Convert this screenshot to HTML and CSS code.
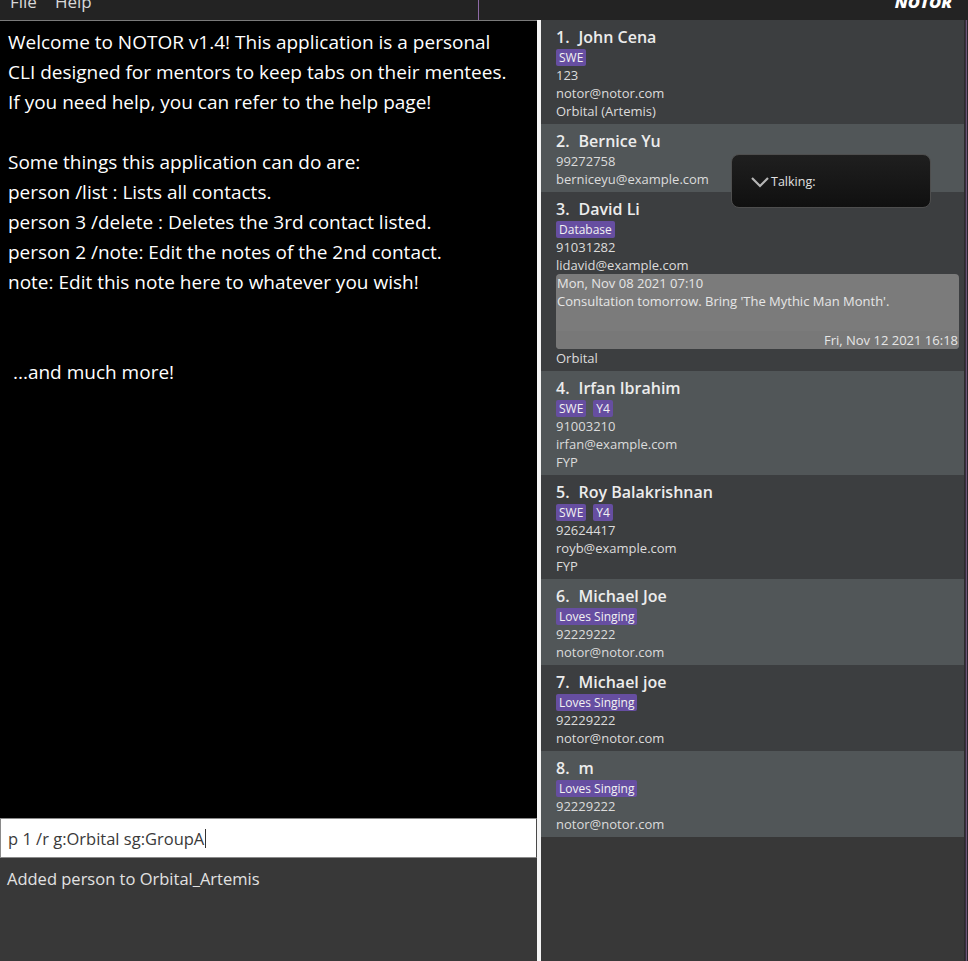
FILE: index.html
```html
<!DOCTYPE html>
<html>
<head>
<meta charset="utf-8">
<link rel="stylesheet" href="styles.css">
</head>
<body>
<div class="app">
  <div class="menubar">
    <span class="menu">File</span>
    <span class="menu">Help</span>
    <span class="sep"></span>
    <span class="spacer"></span>
    <span class="logo">NOTOR</span>
  </div>
  <div class="main">
    <div class="left">
      <div class="welcome">Welcome to NOTOR v1.4! This application is a personal
CLI designed for mentors to keep tabs on their mentees.
If you need help, you can refer to the help page!

Some things this application can do are:
person /list : Lists all contacts.
person 3 /delete : Deletes the 3rd contact listed.
person 2 /note: Edit the notes of the 2nd contact.
note: Edit this note here to whatever you wish!


 ...and much more!</div>
      <div class="command"><span class="cmdtext">p 1 /r g:Orbital sg:GroupA</span><span class="caret"></span></div>
      <div class="result">Added person to Orbital_Artemis</div>
    </div>
    <div class="divider"></div>
    <div class="right">
      <div class="list">
        <div class="card odd">
          <div class="name"><span class="idx">1.</span><span class="nm">John Cena</span></div>
          <div class="tags"><span class="tag">SWE</span></div>
          <div class="line">123</div>
          <div class="line">notor@notor.com</div>
          <div class="line">Orbital (Artemis)</div>
        </div>
        <div class="card even">
          <div class="name"><span class="idx">2.</span><span class="nm">Bernice Yu</span></div>
          <div class="line">99272758</div>
          <div class="line">berniceyu@example.com</div>
        </div>
        <div class="card odd">
          <div class="name"><span class="idx">3.</span><span class="nm">David Li</span></div>
          <div class="tags"><span class="tag">Database</span></div>
          <div class="line">91031282</div>
          <div class="line">lidavid@example.com</div>
          <div class="note">
            <div class="note-body">
              <div class="nline">Mon, Nov 08 2021 07:10</div>
              <div class="nline">Consultation tomorrow. Bring 'The Mythic Man Month'.</div>
            </div>
            <div class="note-foot">Fri, Nov 12 2021 16:18</div>
          </div>
          <div class="line">Orbital</div>
        </div>
        <div class="card even">
          <div class="name"><span class="idx">4.</span><span class="nm">Irfan Ibrahim</span></div>
          <div class="tags"><span class="tag">SWE</span><span class="tag">Y4</span></div>
          <div class="line">91003210</div>
          <div class="line">irfan@example.com</div>
          <div class="line">FYP</div>
        </div>
        <div class="card odd">
          <div class="name"><span class="idx">5.</span><span class="nm">Roy Balakrishnan</span></div>
          <div class="tags"><span class="tag">SWE</span><span class="tag">Y4</span></div>
          <div class="line">92624417</div>
          <div class="line">royb@example.com</div>
          <div class="line">FYP</div>
        </div>
        <div class="card even">
          <div class="name"><span class="idx">6.</span><span class="nm">Michael Joe</span></div>
          <div class="tags"><span class="tag">Loves Singing</span></div>
          <div class="line">92229222</div>
          <div class="line">notor@notor.com</div>
        </div>
        <div class="card odd">
          <div class="name"><span class="idx">7.</span><span class="nm">Michael joe</span></div>
          <div class="tags"><span class="tag">Loves Singing</span></div>
          <div class="line">92229222</div>
          <div class="line">notor@notor.com</div>
        </div>
        <div class="card even">
          <div class="name"><span class="idx">8.</span><span class="nm">m</span></div>
          <div class="tags"><span class="tag">Loves Singing</span></div>
          <div class="line">92229222</div>
          <div class="line">notor@notor.com</div>
        </div>
      </div>
      <div class="edge"></div>
      <div class="popup">
        <svg class="chev" width="20" height="12" viewBox="0 0 20 12"><path d="M2 2 L10 10 L18 2" fill="none" stroke="#b5b5b5" stroke-width="2.2"/></svg>
        <span class="ptext">Talking:</span>
      </div>
    </div>
  </div>
</div>
</body>
</html>
```

FILE: styles.css
```css
html, body {
  margin: 0;
  padding: 0;
  background: #383838;
}
body {
  width: 968px;
  height: 961px;
  overflow: hidden;
  font-family: "Open Sans", "Noto Sans", sans-serif;
}
.app {
  display: flex;
  flex-direction: column;
  height: 961px;
}
.menubar {
  height: 20px;
  background: #232323;
  display: flex;
  align-items: flex-start;
  overflow: hidden;
  flex: none;
}
.menu {
  color: #d8d8d8;
  font-size: 17px;
  line-height: 22px;
  margin-top: -9px;
  margin-left: 10px;
  margin-right: 10px;
}
.menu + .menu {
  margin-left: 8px;
}
.sep {
  width: 1px;
  height: 20px;
  background: #8e6aa6;
  margin-left: 376px;
}
.spacer {
  flex: 1;
}
.logo {
  color: #ffffff;
  font-weight: 800;
  font-style: italic;
  font-size: 16.5px;
  line-height: 24px;
  margin-top: -10px;
  margin-right: 16px;
}
.main {
  flex: 1;
  display: flex;
  min-height: 0;
}
.left {
  width: 537px;
  display: flex;
  flex-direction: column;
  flex: none;
}
.welcome {
  flex: 1;
  background: #000;
  border-top: 1px solid #7a7a7a;
  color: #ffffff;
  font-size: 19px;
  line-height: 30px;
  padding: 6px 0 0 8px;
  white-space: pre;
  overflow: hidden;
}
.command {
  height: 38px;
  background: #ffffff;
  border: 1px solid #8a8a8a;
  border-right-color: #4a4a4a;
  display: flex;
  align-items: center;
  padding-left: 7px;
  flex: none;
}
.cmdtext {
  color: #3a3a3a;
  font-size: 16.5px;
}
.caret {
  width: 1px;
  height: 19px;
  background: #333;
  margin-left: 1px;
}
.result {
  height: 93px;
  background: #383838;
  color: #e2e2e2;
  font-size: 16.5px;
  line-height: 22px;
  padding: 10px 0 0 7px;
  flex: none;
}
.divider {
  width: 4px;
  background: #f4f4f4;
  flex: none;
}
.right {
  flex: 1;
  display: flex;
  background: #383838;
  position: relative;
}
.list {
  flex: 1;
  display: flex;
  flex-direction: column;
}
.edge {
  width: 4px;
  background: linear-gradient(to right, #2c2c2c 0 1px, #3a2f3e 1px 2px, #6a5478 2px 3px, #2a262a 3px 4px);
}
.card {
  padding: 6px 5px 4px 15px;
  color: #dcdcdc;
}
.odd {
  background: #3c3e40;
}
.even {
  background: #515658;
}
.name {
  height: 22px;
  line-height: 22px;
  font-size: 16px;
  font-weight: 600;
  color: #ececec;
  white-space: pre;
}
.nm {
  margin-left: 9px;
}
.tags {
  height: 18px;
  display: flex;
  align-items: center;
  gap: 7px;
}
.tag {
  background: #664ea1;
  color: #f2f2f2;
  font-size: 12px;
  line-height: 17px;
  height: 17px;
  padding: 0 3px;
  border-radius: 2px;
}
.line {
  height: 18px;
  line-height: 18px;
  font-size: 13px;
  color: #dcdcdc;
}
.note {
  background: #7b7b7b;
  border-radius: 4px;
  overflow: hidden;
  color: #e6e6e6;
  font-size: 13px;
}
.note-body {
  height: 57px;
  padding-left: 1px;
}
.nline {
  height: 18px;
  line-height: 18px;
}
.note-foot {
  height: 18px;
  line-height: 18px;
  text-align: right;
  background: #787878;
  padding-right: 1px;
}
.popup {
  position: absolute;
  left: 190px;
  top: 134px;
  width: 180px;
  height: 52px;
  border: 1px solid #4e4e4e;
  border-radius: 8px;
  background: linear-gradient(#1f1f1f, #101010);
  display: flex;
  align-items: center;
  padding-left: 18px;
  box-sizing: content-box;
}
.chev {
  margin-top: 2px;
}
.ptext {
  color: #e0e0e0;
  font-size: 12.5px;
  margin-left: 1px;
}
```
